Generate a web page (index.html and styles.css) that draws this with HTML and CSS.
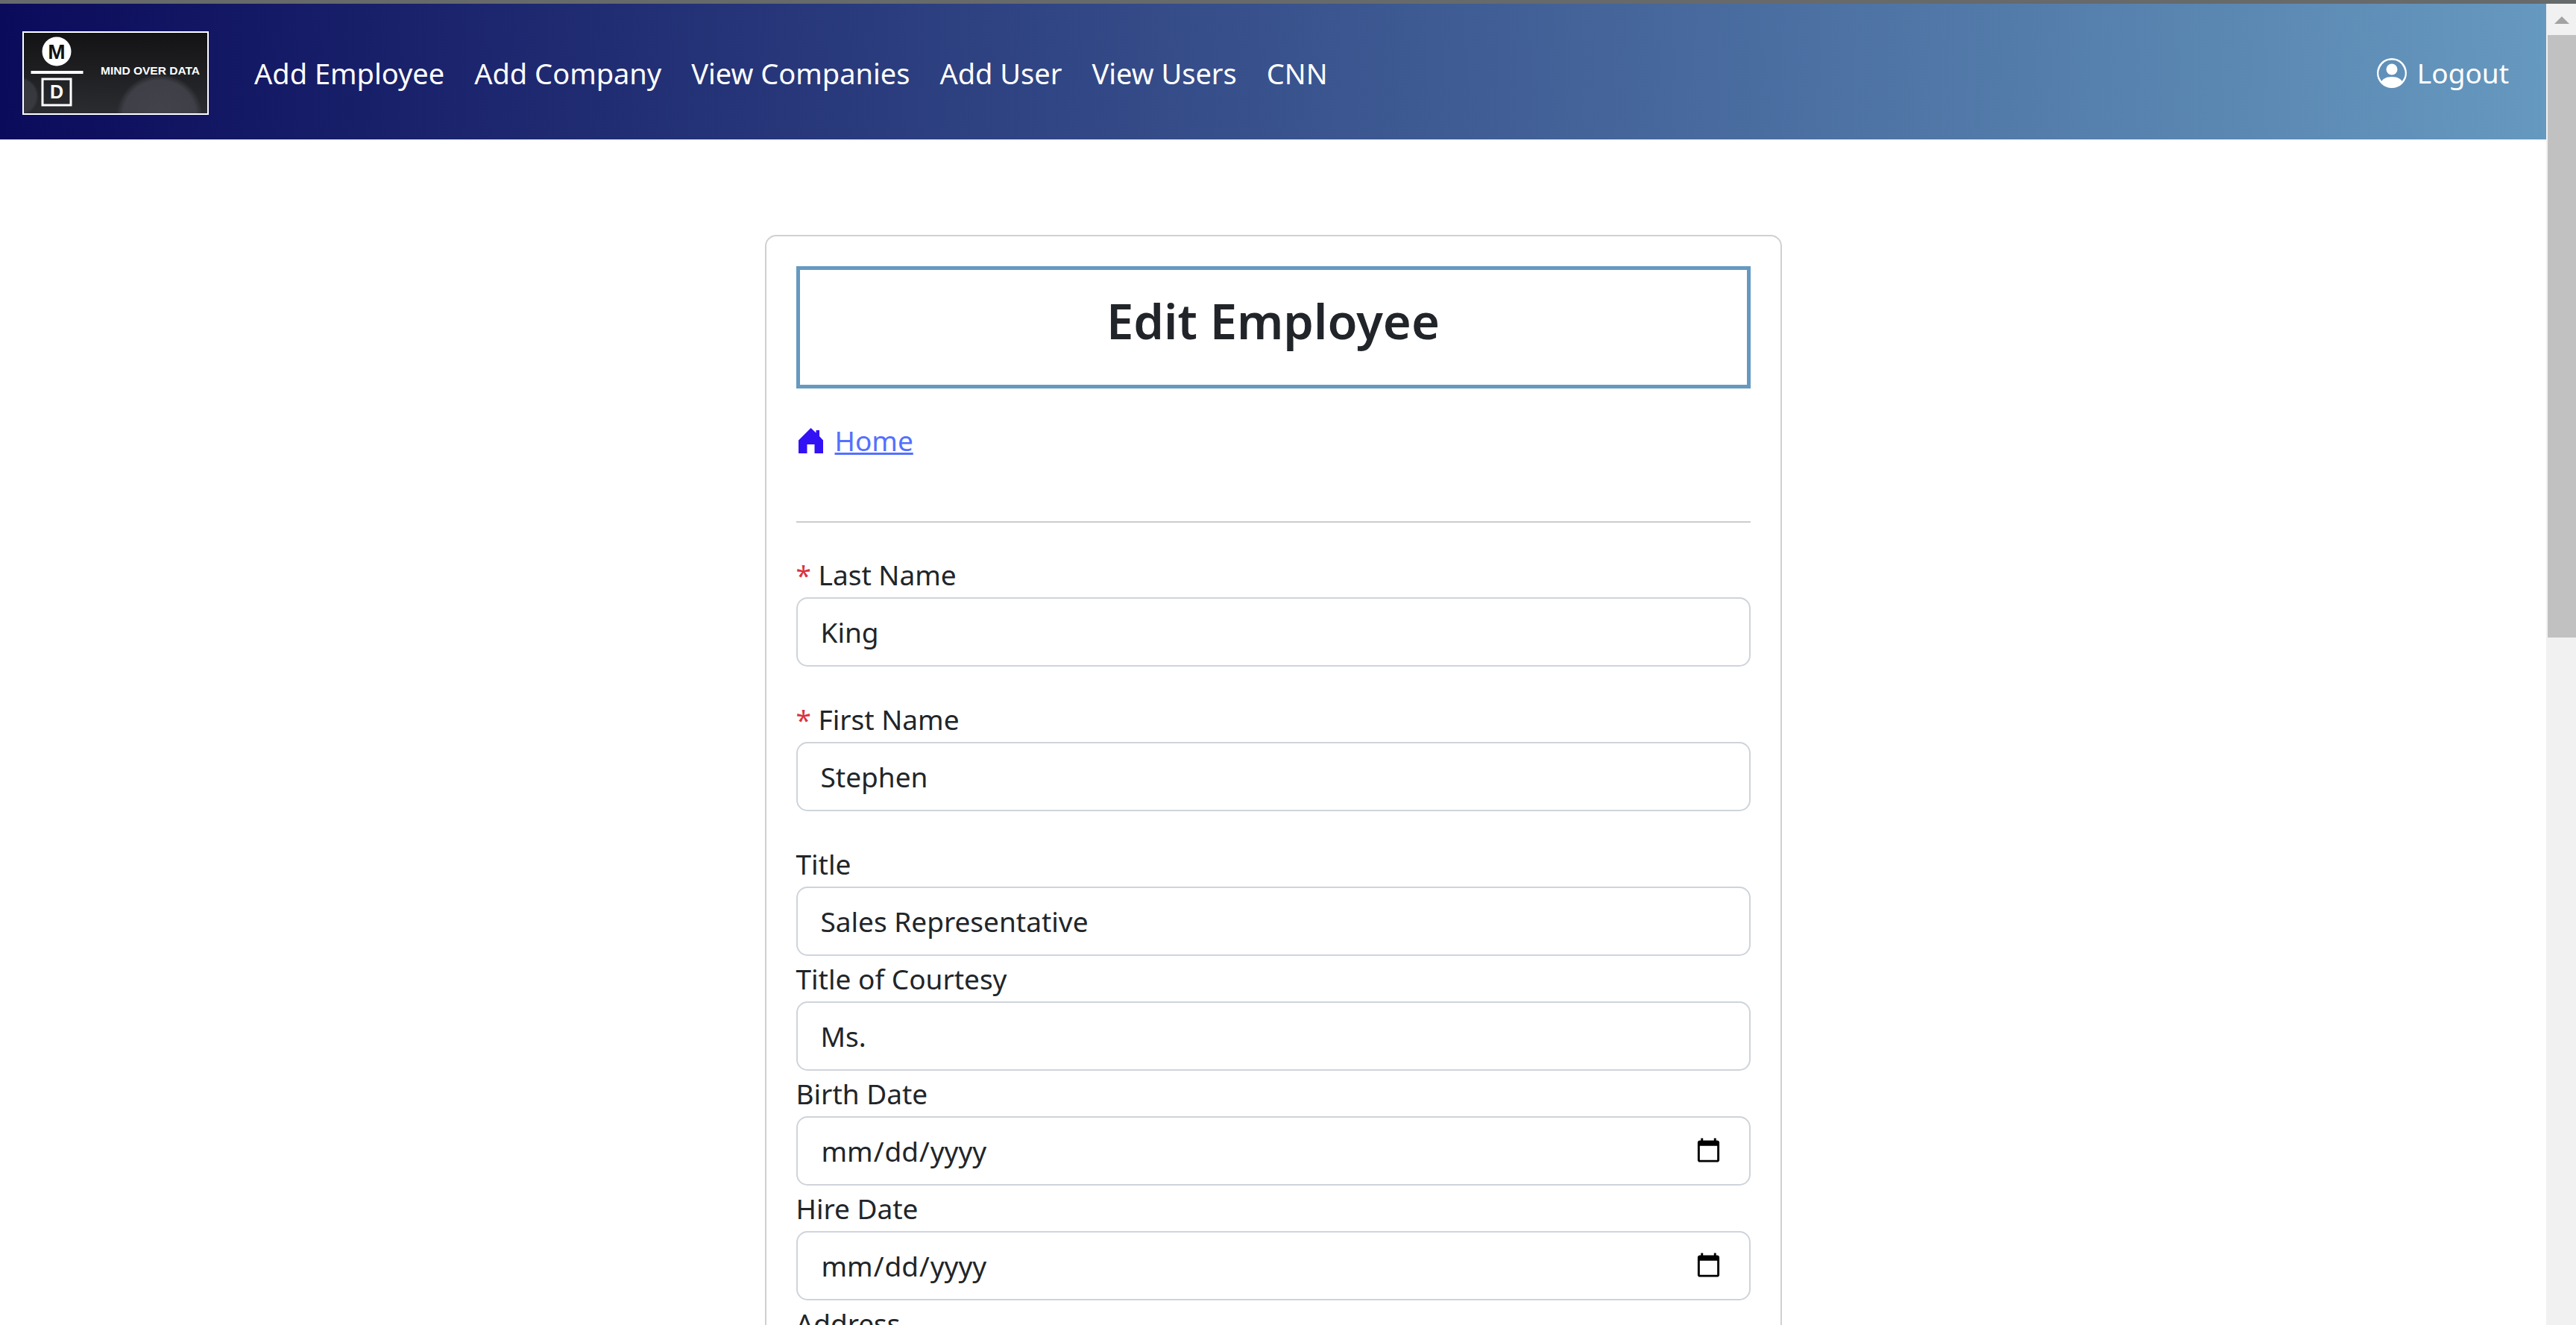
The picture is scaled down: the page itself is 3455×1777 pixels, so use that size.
FILE: index.html
```html
<!DOCTYPE html>
<html>
  <head>
    <title>Edit Employee</title>
    <link rel="stylesheet" href="styles.css">
  </head>
  <body>
    <div class="topline"></div>
    <div class="window">
      <div class="page">
        <nav class="navbar">
          <a class="logo" href="#">
            <svg viewBox="0 0 246 108" width="246" height="108">
              <defs>
                <linearGradient id="logoBg" x1="0" y1="0" x2="0" y2="1">
                  <stop offset="0" stop-color="#131315" />
                  <stop offset="1" stop-color="#2b2c30" />
                </linearGradient>
                <radialGradient id="glow">
                  <stop offset="0" stop-color="#43444b" />
                  <stop offset="0.85" stop-color="#3f4047" />
                  <stop offset="1" stop-color="#3f4047" stop-opacity="0" />
                </radialGradient>
              </defs>
              <rect width="246" height="108" fill="url(#logoBg)" />
              <circle cx="182" cy="113" r="58" fill="url(#glow)" />
              <circle cx="-6" cy="85" r="26" fill="url(#glow)" opacity="0.7" />
              <circle cx="44" cy="25" r="19.5" fill="#fff" />
              <text class="logo-m" x="44" y="35" text-anchor="middle">M</text>
              <rect x="9.5" y="51" width="70" height="4" fill="#fff" />
              <rect x="25" y="62" width="38" height="35" fill="none" stroke="#fff" stroke-width="3" />
              <text class="logo-d" x="44" y="88" text-anchor="middle">D</text>
              <text class="logo-text" x="103" y="56" textLength="133" lengthAdjust="spacingAndGlyphs">MIND OVER DATA</text>
            </svg>
          </a>
          <a class="nav-link" href="#">Add Employee</a>
          <a class="nav-link" href="#">Add Company</a>
          <a class="nav-link" href="#">View Companies</a>
          <a class="nav-link" href="#">Add User</a>
          <a class="nav-link" href="#">View Users</a>
          <a class="nav-link" href="#">CNN</a>
          <a class="nav-link logout" href="#">
            <svg viewBox="0 0 16 16" width="40" height="40" fill="#fff">
              <path d="M11 6a3 3 0 1 1-6 0 3 3 0 0 1 6 0z" />
              <path fill-rule="evenodd" d="M0 8a8 8 0 1 1 16 0A8 8 0 0 1 0 8zm8-7a7 7 0 0 0-5.468 11.37C3.242 11.226 4.805 10 8 10s4.757 1.225 5.468 2.37A7 7 0 0 0 8 1z" />
            </svg>
            Logout
          </a>
        </nav>

        <main class="card">
          <h2 class="card-title">Edit Employee</h2>
          <p class="home">
            <svg viewBox="0 0 33 34" width="33" height="34" fill="#3311f5">
              <path d="M16.500 0 L23.500 6.500 V3 H28 V11 L33 16.500 V34 H21.500 V22 H11.500 V34 H0 V16.500 Z" />
            </svg>
            <a href="#">Home</a>
          </p>
          <hr class="divider">

          <form>
            <div class="field spaced">
              <label for="lastName"><span class="req">*</span> Last Name</label>
              <input class="control" type="text" id="lastName" value="King">
            </div>
            <div class="field spaced">
              <label for="firstName"><span class="req">*</span> First Name</label>
              <input class="control" type="text" id="firstName" value="Stephen">
            </div>
            <div class="field">
              <label for="title">Title</label>
              <input class="control" type="text" id="title" value="Sales Representative">
            </div>
            <div class="field">
              <label for="courtesy">Title of Courtesy</label>
              <input class="control" type="text" id="courtesy" value="Ms.">
            </div>
            <div class="field">
              <label for="birthDate">Birth Date</label>
              <input class="control" type="date" id="birthDate">
            </div>
            <div class="field">
              <label for="hireDate">Hire Date</label>
              <input class="control" type="date" id="hireDate">
            </div>
            <div class="field">
              <label for="address">Address</label>
              <input class="control" type="text" id="address">
            </div>
          </form>
        </main>
      </div>

      <div class="scrollbar">
        <div class="scroll-up"></div>
        <div class="scroll-thumb"></div>
      </div>
    </div>
  </body>
</html>
```

FILE: styles.css
```css
html, body {
  height: 100%;
}

body {
  margin: 0;
  overflow: hidden;
  background-color: #fff;
  color: #212529;
  font-family: "Noto Sans", Arial, sans-serif;
  font-size: 37px;
  line-height: 60px;
}

.topline {
  height: 5px;
  background-color: #666a6a;
}

.window {
  display: flex;
  height: 1772px;
}

.page {
  flex: 1;
  min-width: 0;
  overflow: hidden;
}

/* navbar */
.navbar {
  display: flex;
  align-items: center;
  box-sizing: border-box;
  height: 182px;
  padding: 4px 50px 0 30px;
  background: linear-gradient(to right, #0b0b5b, #6699bf);
}

.logo {
  display: block;
  flex: none;
  width: 246px;
  height: 108px;
  margin-right: 21px;
  border: 2px solid #fff;
}

.logo svg {
  display: block;
}

.logo-m,
.logo-d {
  font-family: "Liberation Sans", Arial, sans-serif;
  font-size: 28px;
  font-weight: bold;
  fill: #111;
}

.logo-d {
  font-size: 25px;
  fill: #fff;
}

.logo-text {
  font-family: "Liberation Sans", Arial, sans-serif;
  font-size: 14px;
  font-weight: bold;
  fill: #fff;
}

.nav-link {
  margin-left: 40px;
  color: #fff;
  font-size: 38px;
  text-decoration: none;
}

.logout {
  display: flex;
  align-items: center;
  gap: 14px;
  margin-left: auto;
  font-size: 37px;
}

/* card */
.card {
  width: 1280px;
  margin: 128px auto 0;
  padding: 40px;
  border: 2px solid #d0d0d0;
  border-radius: 15px;
}

.card-title {
  margin: 0;
  padding: 39px 0 57px;
  border: 5px solid #6699bf;
  font-size: 65px;
  font-weight: 600;
  line-height: 58px;
  text-align: center;
}

.home {
  display: flex;
  align-items: center;
  gap: 16px;
  margin: 40px 0 0;
  padding-left: 3px;
}

.home a {
  color: #5470ff;
}

.divider {
  height: 2px;
  margin: 78px 0 39px;
  border: 0;
  background-color: #ccc;
}

/* form */
.field label {
  display: block;
  line-height: 61px;
}

.field.spaced {
  margin-bottom: 40px;
}

.req {
  color: #d9343f;
}

.control {
  display: block;
  box-sizing: border-box;
  width: 100%;
  height: 93px;
  padding: 0 34px 0 31px;
  border: 2px solid #ced4da;
  border-radius: 15px;
  background-color: #fff;
  color: #212529;
  font-family: inherit;
  font-size: 37px;
}

/* fake window scrollbar */
.scrollbar {
  flex: none;
  width: 38px;
  padding-left: 2px;
  background-color: #f1f1f1;
}

.scroll-up {
  height: 42px;
  position: relative;
}

.scroll-up::after {
  content: "";
  position: absolute;
  left: 9px;
  top: 17px;
  border-left: 10px solid transparent;
  border-right: 10px solid transparent;
  border-bottom: 10px solid #a3a3a3;
}

.scroll-thumb {
  height: 808px;
  background-color: #c1c1c1;
}
```
